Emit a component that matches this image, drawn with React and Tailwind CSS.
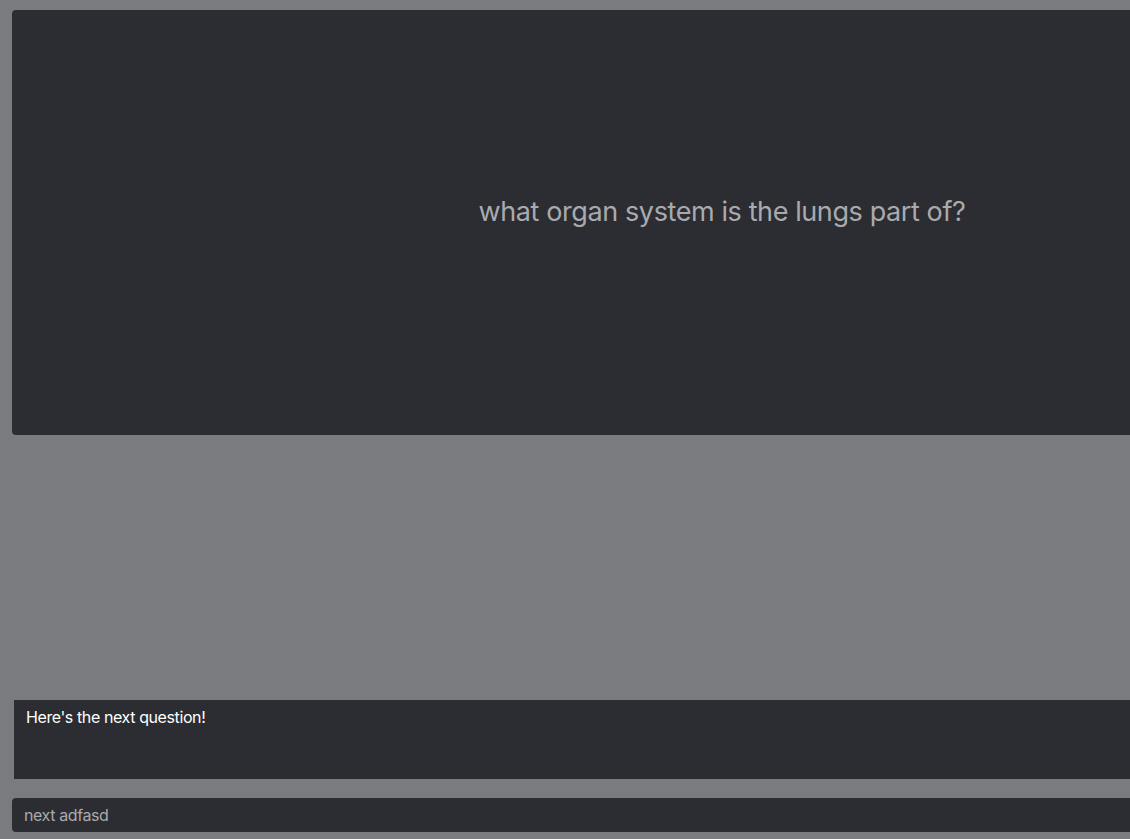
export default function App() {
  return (
    <div className="h-[839px] w-[1130px] overflow-hidden bg-[#7a7b7f] font-['Inter','Liberation_Sans',sans-serif]">
      <div className="flex w-[1430px] flex-col pl-[12px] pt-[10px]">
        {/* QUESTION CARD */}
        <div className="flex h-[425px] w-[1420px] items-start justify-center rounded-[4px] bg-[#2c2d32] pt-[183px]">
          <p className="text-[27px] leading-[38px] tracking-[-0.4px] text-[#a9aaae]">
            what organ system is the lungs part of?
          </p>
        </div>

        {/* BOT MESSAGE */}
        <div className="ml-[2px] mt-[265px] h-[79px] w-[1418px] bg-[#2c2d32] px-[12px] pt-[6px]">
          <p className="text-[16px] leading-[22px] tracking-[-0.4px] text-white">Here's the next question!</p>
        </div>

        {/* INPUT */}
        <div className="mt-[19px] flex h-[34px] w-[1420px] items-center rounded-[4px] bg-[#2c2d32] px-[12px]">
          <span className="text-[16px] tracking-[-0.4px] text-[#a9aaae]">next adfasd</span>
        </div>
      </div>
    </div>
  );
}
